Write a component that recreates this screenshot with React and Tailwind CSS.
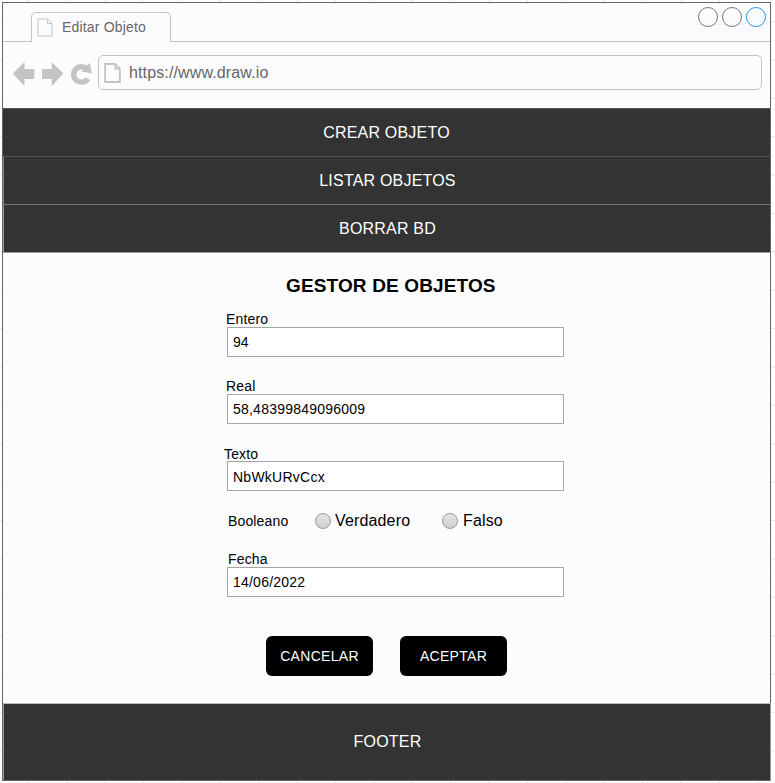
import React from "react";

function PageIcon({ className, strokeWidth, foldWidth }) {
  return (
    <svg className={className} viewBox="0 0 16 19" fill="none" stroke="#c4c4c4" strokeWidth={strokeWidth}>
      <path d="M1 1H10.5L15 5.5V18H1Z" />
      <path d="M10.5 1V5.5H15" strokeWidth={foldWidth} />
    </svg>
  );
}

function NavRow({ children, className }) {
  return (
    <a className={`flex h-12 items-center justify-center border-b text-base leading-none text-white ${className}`}>
      {children}
    </a>
  );
}

function Field({ label, value, labelClass, inputClass, className }) {
  return (
    <label className={`block ${className}`}>
      <span className={`block h-4 text-sm leading-4 ${labelClass}`}>{label}</span>
      <input
        className={`block h-[30px] w-[337px] border border-[#a6a6a8] bg-white pl-[5px] text-sm leading-none text-black outline-none ${inputClass}`}
        defaultValue={value}
      />
    </label>
  );
}

function Radio({ children, className, textClass }) {
  return (
    <label className={`flex h-5 items-center text-base leading-5 tracking-[0.15px] ${className}`}>
      <span className="mr-1 size-4 rounded-full border border-[#999] bg-linear-to-b from-[#e6e6e6] to-[#cecece]" />
      <span className={textClass}>{children}</span>
    </label>
  );
}

export default function App() {
  return (
    <div className="h-[783px] w-[775px] bg-white bg-[linear-gradient(to_right,#e7e7e7_1px,transparent_1px),linear-gradient(to_bottom,#e7e7e7_1px,transparent_1px),linear-gradient(to_right,#f8f8f8_1px,transparent_1px),linear-gradient(to_bottom,#f8f8f8_1px,transparent_1px)] bg-[size:38.4px_38.4px,38.4px_38.4px,9.6px_9.6px,9.6px_9.6px] bg-position-[28px_21px] pt-0.5 pl-0.5 font-['Liberation_Sans',Arial,sans-serif] text-black">
      <div className="flex h-[779px] w-[769px] flex-col border border-[#666] bg-[#fcfcff]">
        <header className="h-[105px] shrink-0 text-[#666]">
          <div className="flex h-[39px] items-end">
            <div className="w-[28px] border-b border-[#c4c4c4]" />
            <div className="flex h-[30px] w-[140px] items-center rounded-t-[5px] border border-b-0 border-[#c4c4c4] pl-[5px]">
              <PageIcon className="h-[19px] w-4" strokeWidth="1" foldWidth="1" />
              <span className="-mt-px ml-[9px] text-sm leading-none tracking-[0.18px]">Editar Objeto</span>
            </div>
            <div className="flex h-[39px] flex-1 justify-end gap-1 border-b border-[#c4c4c4] pt-1 pr-1">
              <span className="size-5 rounded-full border border-[#777]" />
              <span className="size-5 rounded-full border border-[#777]" />
              <span className="size-5 rounded-full border border-[#1e96ff]" />
            </div>
          </div>
          <div className="flex pt-[13px] pl-[9px]">
            <svg className="mt-1 h-7 w-[84px]" viewBox="12 59 84 28" fill="#c4c4c4">
              <path d="M12.7 73.5L24.5 62V69H34.3V79H24.5V86Z" />
              <path d="M63.5 73.5L51.7 62V69H42V79H51.7V86Z" />
              <path d="M86.6 68.8A7.7 7.7 0 1 0 87.8 78.7" fill="none" stroke="#c4c4c4" strokeWidth="5.4" />
              <path d="M89.8 62.8L92 73.2L81.4 71.8Z" />
            </svg>
            <div className="ml-[2px] flex h-[35px] w-[664px] items-center rounded-[5px] border border-[#c4c4c4] pl-[5px]">
              <PageIcon className="h-[20px] w-[17px]" strokeWidth="1.8" foldWidth="1.5" />
              <span className="ml-2 text-base leading-none tracking-[0.13px]">https://www.draw.io</span>
            </div>
          </div>
        </header>

        <nav className="shrink-0 border-t border-[#555] bg-[#333]">
          <NavRow className="border-[#555] tracking-[0.2px]">CREAR OBJETO</NavRow>
          <NavRow className="border-l border-b-[#777] border-l-[#888] pl-px tracking-[0.2px]">LISTAR OBJETOS</NavRow>
          <NavRow className="border-l border-b-[#999] border-l-[#999] pl-px tracking-[0.2px]">BORRAR BD</NavRow>
        </nav>

        <main className="h-[450px] shrink-0 pl-[224px]">
          <h1 className="ml-[59px] pt-[23px] text-[19px] leading-5 font-bold tracking-[0.14px]">GESTOR DE OBJETOS</h1>
          <Field label="Entero" value="94" className="mt-[15px]" labelClass="-ml-px tracking-[0.15px]" />
          <Field label="Real" value="58,48399849096009" className="mt-[21px]" labelClass="-ml-px tracking-[0.15px]" inputClass="tracking-[0.22px]" />
          <Field label="Texto" value="NbWkURvCcx" className="mt-[21px]" labelClass="relative top-px -ml-[3px] tracking-[0.15px]" inputClass="pt-0.5 tracking-[0.25px]" />
          <div className="mt-5 flex h-5 items-center">
            <span className="w-[88px] pl-px text-sm leading-4 tracking-[0.15px]">Booleano</span>
            <Radio className="w-[127px]">Verdadero</Radio>
            <Radio textClass="pl-px">Falso</Radio>
          </div>
          <Field label="Fecha" value="14/06/2022" className="mt-5" labelClass="pl-px tracking-[0.15px]" inputClass="tracking-[0.22px]" />
          <div className="mt-[39px] ml-[39px] flex gap-[27px]">
            <button className="h-10 w-[107px] rounded-md bg-black text-sm tracking-[0.3px] text-white">CANCELAR</button>
            <button className="h-10 w-[107px] rounded-md bg-black text-sm tracking-[0.3px] text-white">ACEPTAR</button>
          </div>
        </main>

        <footer className="-mr-px -mb-px flex flex-1 items-center justify-center border border-[#999] border-t-[#bbb] border-b-[#666] bg-[#333] pl-px text-base leading-none tracking-[0.2px] text-white">
          FOOTER
        </footer>
      </div>
    </div>
  );
}
